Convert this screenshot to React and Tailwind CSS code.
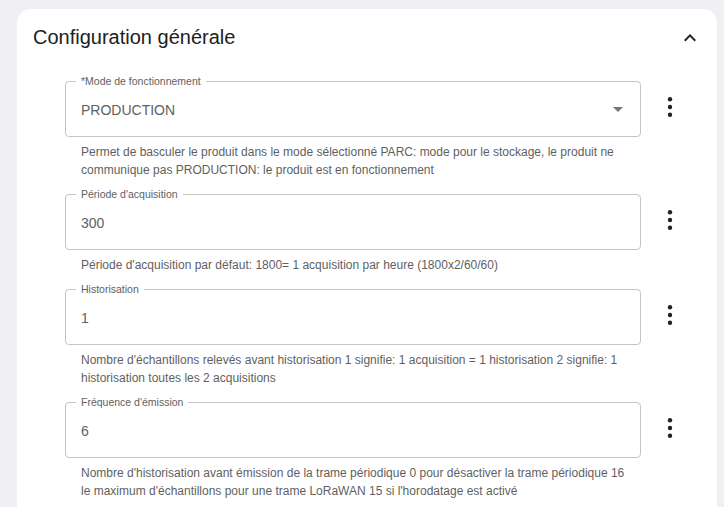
import React from "react";

const fields = [
  {
    label: "*Mode de fonctionnement",
    value: "PRODUCTION",
    select: true,
    help: "Permet de basculer le produit dans le mode sélectionné PARC: mode pour le stockage, le produit ne communique pas PRODUCTION: le produit est en fonctionnement",
  },
  {
    label: "Période d'acquisition",
    value: "300",
    help: "Période d'acquisition par défaut: 1800= 1 acquisition par heure (1800x2/60/60)",
  },
  {
    label: "Historisation",
    value: "1",
    help: "Nombre d'échantillons relevés avant historisation 1 signifie: 1 acquisition = 1 historisation 2 signifie: 1 historisation toutes les 2 acquisitions",
  },
  {
    label: "Fréquence d'émission",
    value: "6",
    help: "Nombre d'historisation avant émission de la trame périodique 0 pour désactiver la trame périodique 16 le maximum d'échantillons pour une trame LoRaWAN 15 si l'horodatage est activé",
  },
];

function Kebab() {
  return (
    <svg width="8" height="24" viewBox="0 0 8 24" className="block">
      <circle cx="4" cy="4.3" r="2.2" fill="#222" />
      <circle cx="4" cy="12" r="2.2" fill="#222" />
      <circle cx="4" cy="19.7" r="2.2" fill="#222" />
    </svg>
  );
}

function Field({ f }) {
  return (
    <div className="flex flex-col">
      <div className="flex">
        <div className="relative flex-1 h-[56px] rounded-[4px] border border-[#c4c4c4] flex items-center pl-[15px] pr-3">
          <span className="absolute -top-[8px] left-[10px] px-[5px] bg-white text-[10.5px] leading-[14px] text-[#616161]">
            {f.label}
          </span>
          <span className="flex-1 text-[14px] leading-[20px] text-[#616161] pt-[1px]">{f.value}</span>
          {f.select && (
            <svg width="24" height="24" viewBox="0 0 24 24" className="mr-[-2px]">
              <path d="M7 10l5 5 5-5z" fill="#757575" />
            </svg>
          )}
        </div>
        <div className="w-10 ml-[9px] flex items-center justify-center pb-[4px]">
          <Kebab />
        </div>
      </div>
      <p className="mt-[6px] pl-4 w-[576px] pr-4 text-[12px] leading-[18px] text-[#5f5f5f]">{f.help}</p>
    </div>
  );
}

export default function App() {
  return (
    <div
      className="h-[507px] w-[724px] overflow-hidden bg-[#f0f0f4] pt-[9px] pl-[17px]"
      style={{ fontFamily: '"Liberation Sans", Arial, sans-serif' }}
    >
      <div className="w-[700px] h-[520px] bg-white rounded-t-[14px]">
        <div className="h-14 flex items-center justify-between pl-4 pr-[15px]">
          <h2 className="text-[20px] leading-[24px] text-[#212121]">Configuration générale</h2>
          <svg width="24" height="24" viewBox="0 0 24 24" className="mt-[1px]">
            <path d="m12 8-6 6 1.41 1.41L12 10.83l4.59 4.58L18 14z" fill="#222" />
          </svg>
        </div>
        <div className="mt-4 pl-12 pr-[27px] flex flex-col gap-[15px]">
          {fields.map((f, i) => (
            <Field key={i} f={f} />
          ))}
        </div>
      </div>
    </div>
  );
}
